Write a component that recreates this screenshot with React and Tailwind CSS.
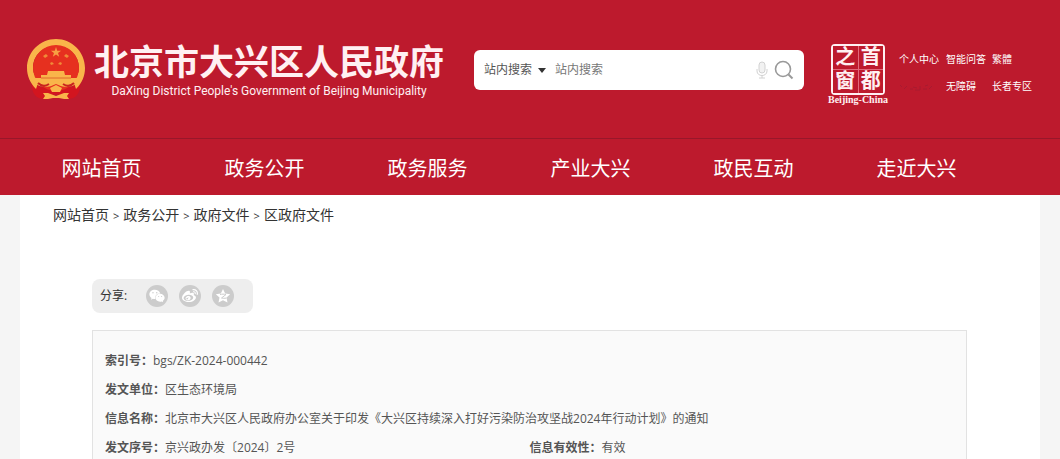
import { FaWeixin, FaWeibo } from "react-icons/fa";

const navItems = ["网站首页", "政务公开", "政务服务", "产业大兴", "政民互动", "走近大兴"];

const crumbs = ["网站首页", "政务公开", "政府文件", "区政府文件"];

const Emblem = () => (
  <svg viewBox="0 0 60 64" className="w-[60px] h-16 shrink-0" aria-hidden="true">
    {/* Drapery */}
    <path d="M6 43c-1 7 1 13 5 16 3 2 6 2 9 1l10-4 10 4c3 1 6 1 9-1 4-3 6-9 5-16l-8 6H14z" fill="#d3151f" />
    {/* Wheat ring */}
    <path d="M30 1C14 1 1 14 1 30c0 8 3 15 9 21l3-9C9 39 7 35 7 30 7 17 17 8 30 8s23 9 23 22c0 5-2 9-6 12l3 9c6-6 9-13 9-21C59 14 46 1 30 1z" fill="#f9b54a" />
    <circle cx="30" cy="30" r="23" fill="#e6301f" />
    {/* Stars */}
    <path d="M30 9l1.200 3.700h3.900l-3.100 2.300 1.200 3.700L30 16.400l-3.200 2.300L28 15l-3.100-2.300h3.900z" fill="#f7a043" />
    <g fill="#f08a38">
      <path d="M17 18l3-2 2 2-3 2zM38 18l2-2 3 2-2 2zM24 25l2-1 2 2-3 1zM32 26l2-2 2 1-1 2z" />
    </g>
    {/* Gate tower */}
    <path d="M22 33h16l1 4h6v3h6v4H9v-4h6v-3h6z" fill="#f9b54a" />
    <path d="M15 40h30" stroke="#e0682c" strokeWidth="1" />
    <path d="M9 43h42c-1 4-5 6-9 5-4 2-7 0-12-2-5 2-8 4-12 2-4 1-8-1-9-5z" fill="#f9b54a" />
    <path d="M12 45c4 4 8 3 11 1M48 45c-4 4-8 3-11 1" fill="none" stroke="#c9231f" strokeWidth="2" />
    <path d="M24 50l6-3 6 3-2 4h-8z" fill="#f9b54a" />
    <path d="M17 55l5 0 8 3 8-3 5 0-2 3 2 3-5 0-5-1-6 0-5 1-5 0 2-3z" fill="#f9b54a" />
  </svg>
);

const CapitalWindow = () => (
  <a href="#" className="flex flex-col items-center w-[58px] text-[#fff0f2] font-['Liberation_Serif','Noto_Sans_CJK_SC',serif]">
    <span className="grid grid-cols-2 gap-px w-[54px] h-[51px] border-2 border-[#fff0f2] rounded-sm bg-[#e2697a] text-xl leading-[23px] font-bold text-center">
      <span className="bg-[#bd1a2d]">之</span>
      <span className="bg-[#bd1a2d]">首</span>
      <span className="bg-[#bd1a2d]">窗</span>
      <span className="bg-[#bd1a2d]">都</span>
    </span>
    <span className="text-[10px] leading-[10px] font-bold whitespace-nowrap">Beijing-China</span>
  </a>
);

const Field = ({ label, children }) => (
  <div className="flex">
    <dt className="font-bold">{label}：</dt>
    <dd>{children}</dd>
  </div>
);

const App = () => {
  return (
    <div className="min-h-screen bg-[#f5f5f5] font-['Open_Sans','Noto_Sans_CJK_SC',sans-serif] text-[#333]">
      <header className="bg-[#bd1a2d] text-white">
        <div className="flex items-start h-[138px] pl-[26px] pr-6">
          <a href="#" className="flex items-start pt-[38px]">
            <Emblem />
            <span className="flex flex-col items-center ml-2 pt-1 text-[#fff0f2]">
              <span className="text-[35px] leading-10 font-bold whitespace-nowrap">北京市大兴区人民政府</span>
              <span className="text-xs leading-[18px] font-['Roboto',sans-serif]">
                DaXing District People&apos;s Government of Beijing Municipality
              </span>
            </span>
          </a>

          {/* Search */}
          <form className="flex items-center w-[330px] h-10 mt-[50px] ml-[30px] px-[10px] rounded-md bg-white text-xs text-[#555]">
            <div className="flex items-center">
              <select aria-label="搜索范围" className="appearance-none w-[52px] bg-transparent outline-none">
                <option>站内搜索</option>
              </select>
              <svg viewBox="0 0 8 5" className="w-2 h-[5px] ml-[2px]" aria-hidden="true">
                <path d="M0 0h8L4 5z" fill="#333" />
              </svg>
            </div>
            <input
              type="text"
              aria-label="站内搜索"
              placeholder="站内搜索"
              className="flex-1 min-w-0 ml-[9px] outline-none placeholder:text-[#777]"
            />
            <svg viewBox="0 0 12 18" className="w-3 h-[18px] mr-[6px]" fill="none" stroke="#d2d2d2" aria-hidden="true">
              <rect x="3" y="1" width="6" height="11" rx="3" fill="#f2f2f2" />
              <path d="M1 8v2c0 6 10 6 10 0V8M6 14v3M3 17h6" />
            </svg>
            <button type="submit" aria-label="搜索">
              <svg viewBox="0 0 20 20" className="w-5 h-5" fill="none" stroke="#999" strokeWidth="1.600">
                <circle cx="9" cy="9" r="7.500" />
                <path d="M14.500 14.500l4 4" strokeWidth="2" />
              </svg>
            </button>
          </form>

          <div className="mt-11 ml-[25px]">
            <CapitalWindow />
          </div>

          <div className="grid grid-cols-[47px_46px_auto] mt-[46px] ml-3 text-[10px] leading-[27px] whitespace-nowrap">
            <a href="#">个人中心</a>
            <a href="#">智能问答</a>
            <a href="#">繁體</a>
            {/* Worn-out entry */}
            <svg viewBox="0 0 36 10" className="w-9 h-[10px] self-center" stroke="#a81a30" fill="none" aria-hidden="true">
              <path d="M1 3l2 2M5 7l3-3M11 7h3M14 5l4 1M16 8h5M21 4v4M24 7h4M26 4l3-1M30 7l3-3" />
            </svg>
            <a href="#">无障碍</a>
            <a href="#">长者专区</a>
          </div>
        </div>

        <nav className="flex h-[57px] pl-5 pr-[62px] border-t border-[#98172a]">
          {navItems.map((item) => (
            <a key={item} href="#" className="flex-1 text-center text-xl leading-[60px]">
              {item}
            </a>
          ))}
        </nav>
      </header>

      <main className="mx-5 min-h-[264px] bg-white pt-[10px]">
        <div className="flex gap-1 pl-[33px] text-sm leading-5">
          {crumbs.map((crumb, i) => (
            <span key={crumb} className="flex gap-1">
              {i > 0 && <span className="text-[11px] leading-[22px]">&gt;</span>}
              <a href="#">{crumb}</a>
            </span>
          ))}
        </div>

        {/* Share bar */}
        <div className="flex items-center w-[161px] h-[34px] mt-[52px] ml-[72px] pl-2 rounded-lg bg-[#eee] text-xs">
          <span className="w-[46px]">分享:</span>
          <div className="flex gap-[11px]">
            <button aria-label="微信" className="flex items-center justify-center w-[22px] h-[22px] rounded-full bg-[#ccc] text-white">
              <FaWeixin className="w-4 h-4" />
            </button>
            <button aria-label="微博" className="flex items-center justify-center w-[22px] h-[22px] rounded-full bg-[#ccc] text-white">
              <FaWeibo className="w-4 h-4" />
            </button>
            <button aria-label="QQ空间" className="flex items-center justify-center w-[22px] h-[22px] rounded-full bg-[#ccc] text-white">
              <svg viewBox="0 0 16 16" className="w-4 h-4" aria-hidden="true">
                <path d="M8 1l2.200 4.600 5 .6-3.700 3.400 1 5L8 12.200l-4.500 2.400 1-5L.8 6.200l5-.6z" fill="#fff" />
                <path d="M5 6.500c2-.5 4-.5 6 0L6.500 10c1.500.4 3 .4 5 .1" fill="none" stroke="#ccc" />
              </svg>
            </button>
          </div>
        </div>

        <dl className="mt-[17px] ml-[72px] mr-[73px] px-3 pt-[15px] border border-b-0 border-[#e2e2e2] bg-[#fafafa] text-xs leading-[29px] text-[#555]">
          <Field label="索引号">bgs/ZK-2024-000442</Field>
          <Field label="发文单位">区生态环境局</Field>
          <Field label="信息名称">北京市大兴区人民政府办公室关于印发《大兴区持续深入打好污染防治攻坚战2024年行动计划》的通知</Field>
          <div className="grid grid-cols-2">
            <Field label="发文序号">京兴政办发〔2024〕2号</Field>
            <Field label="信息有效性">有效</Field>
          </div>
        </dl>
      </main>
    </div>
  );
};

export default App;
